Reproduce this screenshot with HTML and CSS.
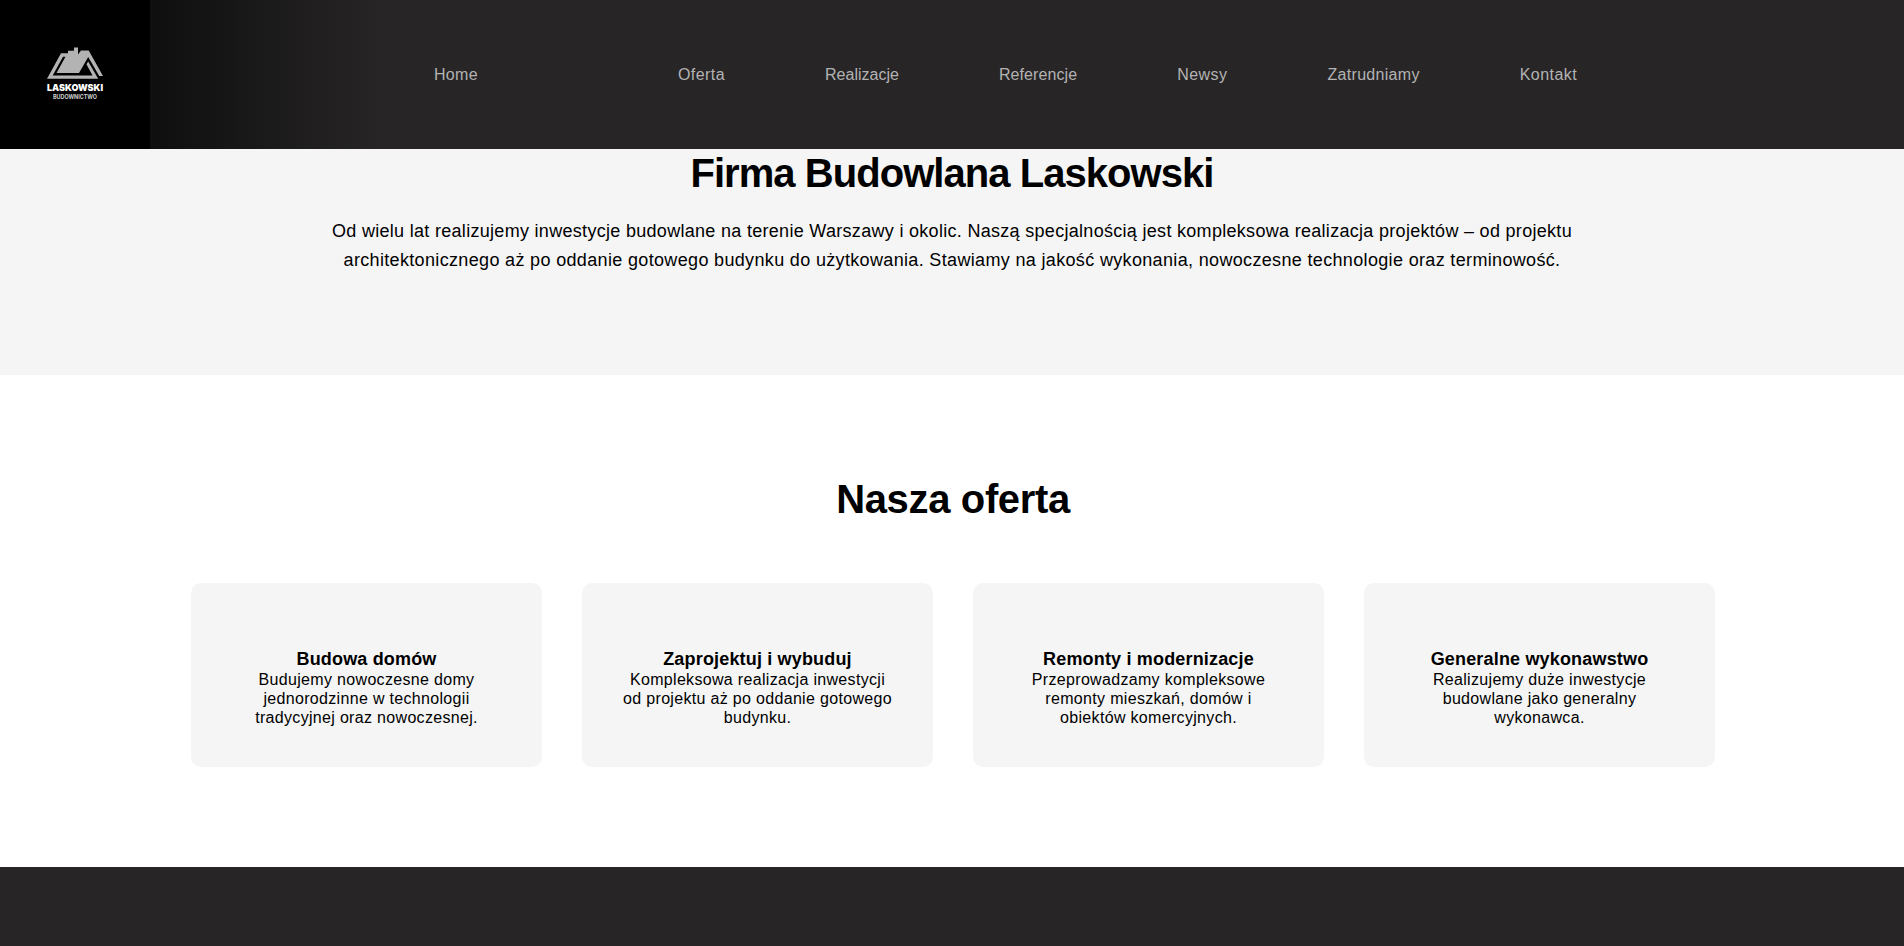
FILE: index.html
```html
<!DOCTYPE html>
<html lang="pl">
<head>
    <meta charset="UTF-8">
    <meta name="viewport" content="width=device-width, initial-scale=1.0">
    <title>Firma Budowlana Laskowski</title>
    <link rel="stylesheet" href="styles.css">
</head>
<body>
    <header class="header">
        <a href="#" class="logo">
            <svg width="150" height="149" viewBox="0 0 150 149">
                <path fill="#b3b3b3" fill-rule="evenodd" d="M47 78.8 L61 53.2 H68 V50.8 H74 V47.5 H78 V54.5 L81 50.5 H88.7 L103 76 H99.2 L88.2 57 L79 73 H56.5 L65.5 56.8 H63 L52.7 75.6 H92.5 L86.5 64.2 L88.2 61.5 L98.2 78.8 Z"/>
                <text class="logo-name" x="75" y="91.4" textLength="56" lengthAdjust="spacingAndGlyphs">LASKOWSKI</text>
                <text class="logo-sub" x="75" y="98.8" textLength="44" lengthAdjust="spacingAndGlyphs">BUDOWNICTWO</text>
            </svg>
        </a>
        <nav class="menu">
            <a href="#" class="home">Home</a>
            <a href="#" class="wide">Oferta</a>
            <a href="#" class="tight">Realizacje</a>
            <a href="#" class="snug">Referencje</a>
            <a href="#" class="wide">Newsy</a>
            <a href="#">Zatrudniamy</a>
            <a href="#" class="wide">Kontakt</a>
        </nav>
    </header>

    <section class="about">
        <h1>Firma Budowlana Laskowski</h1>
        <p>Od wielu lat realizujemy inwestycje budowlane na terenie Warszawy i okolic. Naszą specjalnością jest kompleksowa realizacja projektów – od projektu<br>
            <span class="line-two">architektonicznego aż po oddanie gotowego budynku do użytkowania. Stawiamy na jakość wykonania, nowoczesne technologie oraz terminowość.</span></p>
    </section>

    <section class="offer">
        <h2>Nasza oferta</h2>
        <div class="cards">
            <div class="card">
                <h3>Budowa domów</h3>
                <p>Budujemy nowoczesne domy<br>jednorodzinne w technologii<br>tradycyjnej oraz nowoczesnej.</p>
            </div>
            <div class="card">
                <h3>Zaprojektuj i wybuduj</h3>
                <p>Kompleksowa realizacja inwestycji<br>od projektu aż po oddanie gotowego<br>budynku.</p>
            </div>
            <div class="card">
                <h3>Remonty i modernizacje</h3>
                <p>Przeprowadzamy kompleksowe<br>remonty mieszkań, domów i<br>obiektów komercyjnych.</p>
            </div>
            <div class="card">
                <h3>Generalne wykonawstwo</h3>
                <p>Realizujemy duże inwestycje<br>budowlane jako generalny<br>wykonawca.</p>
            </div>
        </div>
    </section>

    <footer class="footer"></footer>
</body>
</html>
```

FILE: styles.css
```css
* {
    margin: 0;
    padding: 0;
    box-sizing: border-box;
}

body {
    font-family: "Liberation Sans", Arial, sans-serif;
    background-color: #fff;
    color: #000;
    height: 946px;
    overflow: hidden;
    display: flex;
    flex-direction: column;
}

/* Header */
.header {
    height: 149px;
    display: flex;
    align-items: center;
    background: linear-gradient(90deg, #000 0%, #272526 20%);
}

.logo {
    width: 150px;
    height: 149px;
    background-color: #000;
}

.logo svg {
    display: block;
}

.logo-name {
    font-family: Inter, sans-serif;
    font-weight: 900;
    font-size: 9.6px;
    fill: #fff;
    text-anchor: middle;
}

.logo-sub {
    font-family: Inter, sans-serif;
    font-weight: 700;
    font-size: 6.4px;
    fill: #d0d0d0;
    text-anchor: middle;
}

.menu {
    display: flex;
    gap: 100px;
    margin-left: 284px;
}

.menu a {
    color: #b3b3b3;
    font-size: 16px;
    line-height: 20px;
    letter-spacing: 0.3px;
    text-decoration: none;
}

.menu .home {
    margin-right: 100px;
}

.menu .wide {
    letter-spacing: 0.45px;
}

.menu .snug {
    letter-spacing: 0.1px;
}

.menu .tight {
    letter-spacing: 0;
}

/* About */
.about {
    height: 226px;
    background-color: #f5f5f5;
    text-align: center;
}

.about h1 {
    font-size: 40px;
    line-height: 48px;
    letter-spacing: -0.95px;
}

.about p {
    margin-top: 20px;
    font-size: 18px;
    line-height: 29px;
    letter-spacing: 0.3px;
    white-space: nowrap;
}

.about .line-two {
    letter-spacing: 0.34px;
}

/* Offer */
.offer {
    height: 492px;
    padding: 100px 189px 100px 191px;
    text-align: center;
}

.offer h2 {
    font-size: 40px;
    line-height: 48px;
    letter-spacing: -0.35px;
    margin-bottom: 60px;
}

.cards {
    display: grid;
    grid-template-columns: repeat(4, 1fr);
    gap: 40px;
}

.card {
    height: 184px;
    padding: 65px 0 40px;
    background-color: #f5f5f5;
    border-radius: 10px;
}

.card h3 {
    font-size: 18px;
    line-height: 22px;
    letter-spacing: 0.17px;
}

.card p {
    font-size: 16px;
    line-height: 19px;
    letter-spacing: 0.32px;
    white-space: nowrap;
}

/* Footer */
.footer {
    flex: 1;
    background-color: #272526;
}
```
